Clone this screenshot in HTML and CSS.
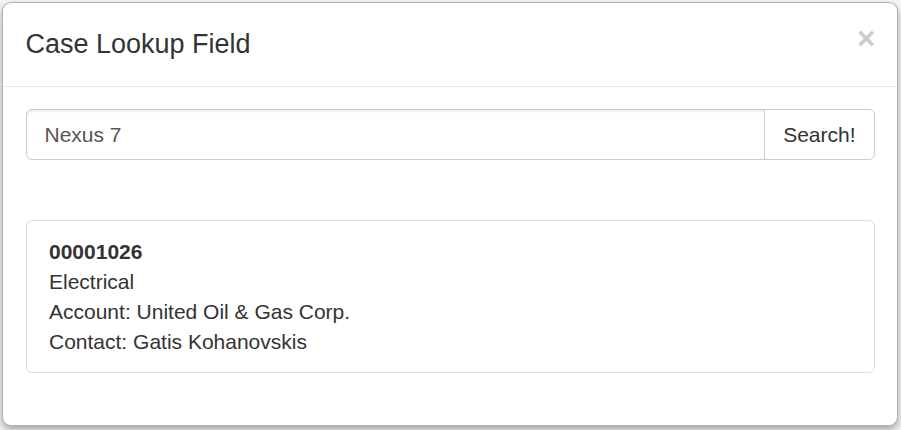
FILE: index.html
```html
<!DOCTYPE html>
<html>
<head>
<meta charset="utf-8">
<link rel="stylesheet" href="styles.css">
</head>
<body>
<div class="modal">
  <div class="modal-header">
    <h4 class="modal-title">Case Lookup Field</h4>
    <button class="close" type="button">×</button>
  </div>
  <div class="modal-body">
    <div class="input-group">
      <input class="form-control" type="text" value="Nexus 7">
      <button class="btn" type="button">Search!</button>
    </div>
    <div class="list-group">
      <div class="list-group-item">
        <div class="case-number">00001026</div>
        <div>Electrical</div>
        <div>Account: United Oil &amp; Gas Corp.</div>
        <div>Contact: Gatis Kohanovskis</div>
      </div>
    </div>
  </div>
</div>
</body>
</html>
```

FILE: styles.css
```css
* { box-sizing: border-box; }
html, body { margin: 0; padding: 0; }
body {
  background: #f7f7f7;
  font-family: "Liberation Sans", Arial, sans-serif;
  font-size: 21px;
  line-height: 30px;
  color: #333;
  height: 430px;
  overflow: hidden;
}
.modal {
  margin: 2px 3px 0 2px;
  background: #fff;
  border: 1.5px solid rgba(0,0,0,0.3);
  border-radius: 9px;
  box-shadow: 0 4px 8px rgba(0,0,0,0.35);
}
.modal-header {
  display: flex;
  align-items: center;
  justify-content: space-between;
  padding: 22px 22.5px 22.5px 22.5px;
  border-bottom: 1.5px solid #e5e5e5;
}
.modal-title {
  margin: 0;
  font-size: 27px;
  font-weight: normal;
  line-height: 38.5px;
  color: #333;
}
.close {
  border: 0;
  background: transparent;
  padding: 0;
  font-family: "Liberation Sans", Arial, sans-serif;
  font-size: 31.5px;
  font-weight: bold;
  line-height: 1;
  color: #000;
  opacity: 0.2;
  margin-top: -11px;
  margin-right: -1px;
}
.modal-body {
  padding: 22px 22.5px 22.5px 22.5px;
}
.input-group {
  display: flex;
  height: 51px;
}
.form-control {
  flex: 1;
  min-width: 0;
  height: 51px;
  padding: 9px 18px;
  font-family: "Liberation Sans", Arial, sans-serif;
  font-size: 21px;
  color: #555;
  background: #fff;
  border: 1.5px solid #ccc;
  border-radius: 6px 0 0 6px;
  box-shadow: inset 0 1.5px 1.5px rgba(0,0,0,0.075);
  outline: none;
}
.btn {
  height: 51px;
  margin-left: -1.5px;
  padding: 9px 18px;
  font-family: "Liberation Sans", Arial, sans-serif;
  font-size: 21px;
  color: #333;
  background: #fff;
  border: 1.5px solid #ccc;
  border-radius: 0 6px 6px 0;
}
.list-group {
  margin-top: 60px;
  margin-bottom: 30px;
}
.list-group-item {
  border: 1.5px solid #ddd;
  border-radius: 6px;
  padding: 15.5px 22.5px 15px 22.5px;
}
.case-number {
  font-weight: bold;
}
```
